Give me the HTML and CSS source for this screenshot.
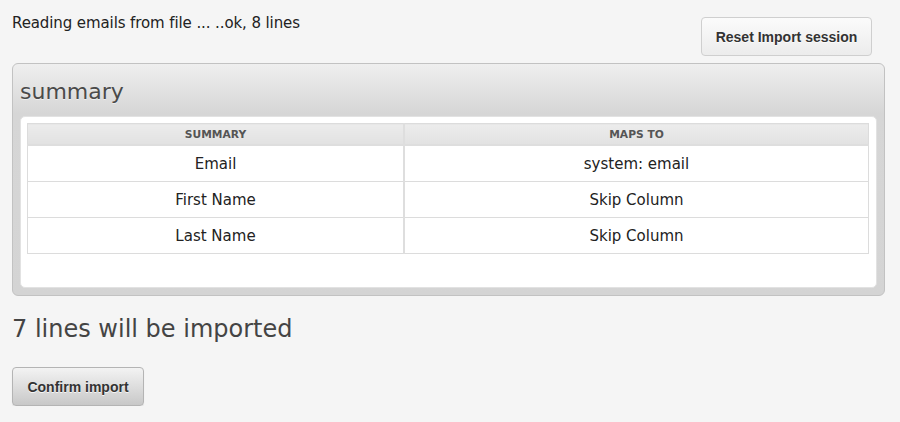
FILE: index.html
```html
<!DOCTYPE html>
<html lang="en">
<head>
<meta charset="utf-8">
<title>Import</title>
<link rel="stylesheet" href="styles.css">
</head>
<body>
<div class="page">
  <div class="topbar">
    <p class="status">Reading emails from file ... ..ok, 8 lines</p>
    <button class="btn btn-reset" type="button">Reset Import session</button>
  </div>
  <section class="panel">
    <h2 class="panel-title">summary</h2>
    <div class="panel-body">
      <table class="summary-table">
        <thead>
          <tr><th class="col-field">Summary</th><th>Maps to</th></tr>
        </thead>
        <tbody>
          <tr><td>Email</td><td>system: email</td></tr>
          <tr><td>First Name</td><td>Skip Column</td></tr>
          <tr><td>Last Name</td><td>Skip Column</td></tr>
        </tbody>
      </table>
    </div>
  </section>
  <h2 class="result">7 lines will be imported</h2>
  <button class="btn btn-confirm" type="button">Confirm import</button>
</div>
</body>
</html>
```
FILE: styles.css
```css
html, body {
  margin: 0;
  padding: 0;
  background: #f5f5f5;
}
body {
  font-family: "DejaVu Sans", Verdana, sans-serif;
  color: #222;
}
.page {
  padding: 14px 15px 0 12px;
}
.topbar {
  display: flex;
  justify-content: space-between;
  align-items: flex-start;
}
.status {
  margin: 0;
  font-size: 15px;
  letter-spacing: -0.1px;
  line-height: 18px;
  color: #222;
}
.btn {
  font-family: "Liberation Sans", Arial, sans-serif;
  font-weight: bold;
  font-size: 14px;
  color: #333;
  text-shadow: 0 1px 0 rgba(255,255,255,0.8);
  height: 39px;
  padding: 0;
  border-radius: 4px;
  white-space: nowrap;
  cursor: pointer;
}
.btn-reset {
  margin: 3px 13px 0 0;
  width: 171px;
  border: 1px solid #cfcfcf;
  background: linear-gradient(#fbfbfb, #ececec);
}
.btn-confirm {
  display: block;
  width: 132px;
  border: 1px solid #b4b4b4;
  background: linear-gradient(#f3f3f3, #c8c8c8);
  box-shadow: 0 1px 1px rgba(0,0,0,0.08);
}
.panel {
  margin-top: 7px;
  border: 1px solid #c2c2c2;
  border-radius: 6px;
  background: linear-gradient(#efefef 0px, #d6d6d6 50px, #d4d4d4 100%);
  padding: 15px 7px 7px 7px;
}
.panel-title {
  margin: 0 0 11px 0;
  font-size: 22px;
  font-weight: normal;
  line-height: 26px;
  color: #4a4a4a;
  text-shadow: 0 1px 0 rgba(255,255,255,0.5);
}
.panel-body {
  background: #fff;
  border: 1px solid #e2e2e2;
  border-radius: 5px;
  padding: 6px 7px 33px 6px;
}
.summary-table {
  width: 100%;
  border-collapse: collapse;
  font-size: 15px;
  color: #222;
}
.summary-table th {
  height: 20px;
  padding: 0;
  font-size: 10.7px;
  font-weight: bold;
  text-transform: uppercase;
  color: #555;
  background: linear-gradient(#ececec, #e2e2e2);
  border: 1px solid #dcdcdc;
  border-bottom: 2px solid #dedede;
}
.summary-table .col-field {
  width: 375px;
}
.summary-table td {
  height: 35px;
  padding: 0;
  text-align: center;
  border: 1px solid #dcdcdc;
}
.summary-table th + th,
.summary-table td + td {
  border-left: 2px solid #dedede;
}
.result {
  margin: 19px 0 24px 0;
  font-size: 24px;
  font-weight: normal;
  line-height: 28px;
  color: #444;
}
```
